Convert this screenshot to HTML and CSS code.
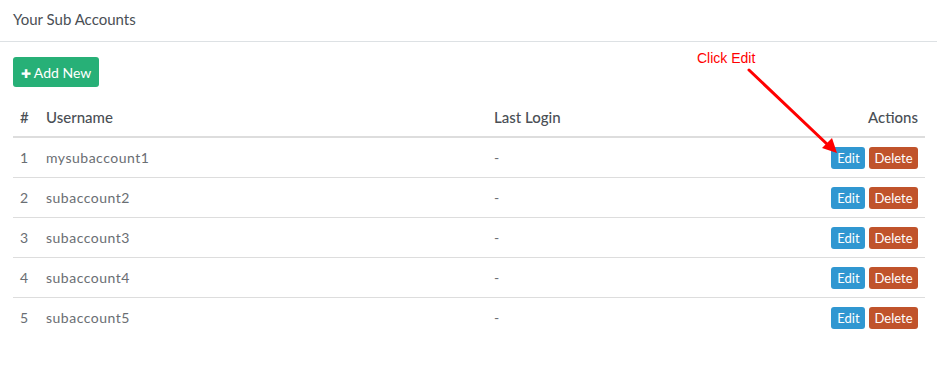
FILE: index.html
```html
<!DOCTYPE html>
<html lang="en">
<head>
    <meta charset="UTF-8">
    <meta name="viewport" content="width=device-width, initial-scale=1.0">
    <title>Your Sub Accounts</title>
    <link rel="stylesheet" href="styles.css">
</head>
<body>

    <div class="panel">
        <div class="panel-heading">Your Sub Accounts</div>
        <div class="panel-body">
            <button class="btn btn-add"><span class="plus">&#10010;</span> Add New</button>

            <table class="accounts">
                <thead>
                    <tr>
                        <th class="col-num">#</th>
                        <th class="col-user">Username</th>
                        <th class="col-login">Last Login</th>
                        <th class="col-actions">Actions</th>
                    </tr>
                </thead>
                <tbody>
                    <tr>
                        <td>1</td>
                        <td>mysubaccount1</td>
                        <td>-</td>
                        <td class="col-actions"><button class="btn-sm btn-edit">Edit</button> <button class="btn-sm btn-delete">Delete</button></td>
                    </tr>
                    <tr>
                        <td>2</td>
                        <td>subaccount2</td>
                        <td>-</td>
                        <td class="col-actions"><button class="btn-sm btn-edit">Edit</button> <button class="btn-sm btn-delete">Delete</button></td>
                    </tr>
                    <tr>
                        <td>3</td>
                        <td>subaccount3</td>
                        <td>-</td>
                        <td class="col-actions"><button class="btn-sm btn-edit">Edit</button> <button class="btn-sm btn-delete">Delete</button></td>
                    </tr>
                    <tr>
                        <td>4</td>
                        <td>subaccount4</td>
                        <td>-</td>
                        <td class="col-actions"><button class="btn-sm btn-edit">Edit</button> <button class="btn-sm btn-delete">Delete</button></td>
                    </tr>
                    <tr>
                        <td>5</td>
                        <td>subaccount5</td>
                        <td>-</td>
                        <td class="col-actions"><button class="btn-sm btn-edit">Edit</button> <button class="btn-sm btn-delete">Delete</button></td>
                    </tr>
                </tbody>
            </table>
        </div>
    </div>

    <!-- annotation drawn over the screenshot -->
    <div class="note">Click Edit</div>
    <svg class="arrow" width="937" height="365" viewBox="0 0 937 365">
        <line x1="749" y1="70" x2="828" y2="145" stroke="#f00" stroke-width="3" stroke-linecap="round"/>
        <polygon points="837,153 822,148 832,138" fill="#f00"/>
    </svg>

</body>
</html>
```

FILE: styles.css
```css
body {
    margin: 0;
    font-family: Lato, "Open Sans", sans-serif;
    color: #555;
    background: #fff;
}
.panel-heading {
    padding: 0 13px;
    height: 41px;
    line-height: 39px;
    font-size: 15px;
    color: #4a4f55;
    border-bottom: 1px solid #dde1e4;
}
.panel-body {
    padding: 15px 12px 0 13px;
}
.btn {
    border: none;
    border-radius: 3px;
    font-family: inherit;
    cursor: pointer;
}
.btn-add {
    width: 86px;
    height: 30px;
    padding: 0;
    background: #27b077;
    color: #fff;
    font-size: 14px;
}
.plus {
    font-size: 12px;
}
.accounts {
    width: 912px;
    margin-top: 10px;
    border-collapse: collapse;
    font-size: 14px;
}
.accounts th {
    height: 39px;
    padding: 0 7px;
    text-align: left;
    font-weight: 500;
    font-size: 15px;
    color: #4a4f55;
    border-bottom: 2px solid #dddddd;
}
.accounts td {
    height: 39px;
    padding: 0 7px;
    color: #6a6e73;
    letter-spacing: 0.5px;
    border-bottom: 1px solid #dddddd;
}
.accounts tbody tr:last-child td {
    border-bottom: none;
}
.col-num {
    width: 12px;
}
.col-user {
    width: 434px;
}
.accounts .col-actions {
    text-align: right;
    letter-spacing: 0;
}
.btn-sm {
    height: 22px;
    padding: 0 5px;
    border: none;
    border-radius: 3px;
    font-family: inherit;
    font-size: 13px;
    color: #fff;
    vertical-align: middle;
    cursor: pointer;
}
.btn-edit {
    width: 34px;
    background: #3097d1;
}
.btn-delete {
    width: 49px;
    background: #c0532b;
}
.note {
    position: absolute;
    left: 697px;
    top: 50px;
    font-family: "Liberation Sans", sans-serif;
    font-size: 14px;
    color: #f00;
}
.arrow {
    position: absolute;
    left: 0;
    top: 0;
    pointer-events: none;
}
```
